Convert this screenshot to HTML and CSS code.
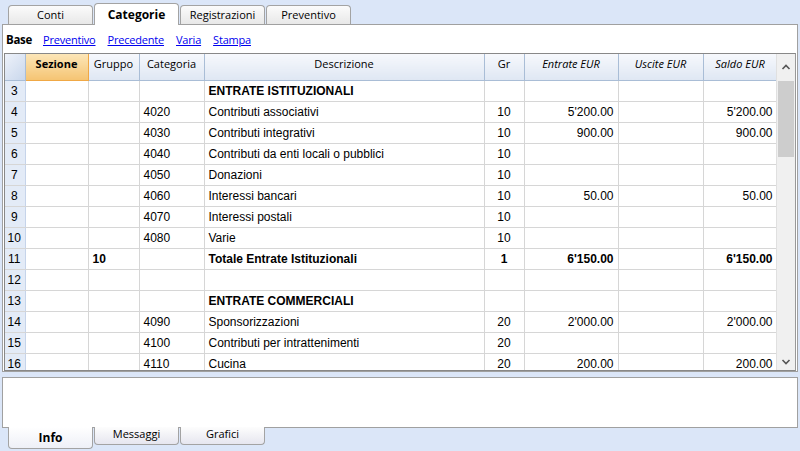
FILE: index.html
```html
<!DOCTYPE html>
<html>
<head>
<meta charset="utf-8">
<link rel="stylesheet" href="styles.css">
</head>
<body>
<div class="tabs top">
  <div class="tab">Conti</div>
  <div class="tab active">Categorie</div>
  <div class="tab">Registrazioni</div>
  <div class="tab">Preventivo</div>
</div>
<div class="panel">
  <div class="links">
    <span class="base">Base</span>
    <a>Preventivo</a>
    <a>Precedente</a>
    <a>Varia</a>
    <a>Stampa</a>
  </div>
  <div class="grid">
    <div class="tablewrap">
      <table>
        <colgroup>
          <col class="c-num"><col class="c-sez"><col class="c-gru"><col class="c-cat"><col class="c-desc"><col class="c-gr"><col class="c-ent"><col class="c-usc"><col class="c-sal">
        </colgroup>
        <thead>
          <tr>
            <th class="corner"></th>
            <th class="sel">Sezione</th>
            <th>Gruppo</th>
            <th>Categoria</th>
            <th>Descrizione</th>
            <th>Gr</th>
            <th class="it">Entrate EUR</th>
            <th class="it">Uscite EUR</th>
            <th class="it">Saldo EUR</th>
          </tr>
        </thead>
        <tbody>
          <tr class="first"><td class="n">3</td><td></td><td></td><td></td><td class="b">ENTRATE ISTITUZIONALI</td><td></td><td></td><td></td><td></td></tr>
          <tr><td class="n">4</td><td></td><td></td><td>4020</td><td>Contributi associativi</td><td class="c">10</td><td class="r">5'200.00</td><td></td><td class="r">5'200.00</td></tr>
          <tr><td class="n">5</td><td></td><td></td><td>4030</td><td>Contributi integrativi</td><td class="c">10</td><td class="r">900.00</td><td></td><td class="r">900.00</td></tr>
          <tr><td class="n">6</td><td></td><td></td><td>4040</td><td>Contributi da enti locali o pubblici</td><td class="c">10</td><td></td><td></td><td></td></tr>
          <tr><td class="n">7</td><td></td><td></td><td>4050</td><td>Donazioni</td><td class="c">10</td><td></td><td></td><td></td></tr>
          <tr><td class="n">8</td><td></td><td></td><td>4060</td><td>Interessi bancari</td><td class="c">10</td><td class="r">50.00</td><td></td><td class="r">50.00</td></tr>
          <tr><td class="n">9</td><td></td><td></td><td>4070</td><td>Interessi postali</td><td class="c">10</td><td></td><td></td><td></td></tr>
          <tr><td class="n">10</td><td></td><td></td><td>4080</td><td>Varie</td><td class="c">10</td><td></td><td></td><td></td></tr>
          <tr><td class="n">11</td><td></td><td class="b">10</td><td></td><td class="b">Totale Entrate Istituzionali</td><td class="c b">1</td><td class="r b">6'150.00</td><td></td><td class="r b">6'150.00</td></tr>
          <tr><td class="n">12</td><td></td><td></td><td></td><td></td><td></td><td></td><td></td><td></td></tr>
          <tr><td class="n">13</td><td></td><td></td><td></td><td class="b">ENTRATE COMMERCIALI</td><td></td><td></td><td></td><td></td></tr>
          <tr><td class="n">14</td><td></td><td></td><td>4090</td><td>Sponsorizzazioni</td><td class="c">20</td><td class="r">2'000.00</td><td></td><td class="r">2'000.00</td></tr>
          <tr><td class="n">15</td><td></td><td></td><td>4100</td><td>Contributi per intrattenimenti</td><td class="c">20</td><td></td><td></td><td></td></tr>
          <tr><td class="n">16</td><td></td><td></td><td>4110</td><td>Cucina</td><td class="c">20</td><td class="r">200.00</td><td></td><td class="r">200.00</td></tr>
        </tbody>
      </table>
    </div>
    <div class="scrollbar">
      <div class="arrow">
        <svg width="10" height="8" viewBox="0 0 10 8"><path d="M1.5 6 L5 2.5 L8.5 6" fill="none" stroke="#555" stroke-width="1.6"/></svg>
      </div>
      <div class="track"><div class="thumb"></div></div>
      <div class="arrow">
        <svg width="10" height="8" viewBox="0 0 10 8"><path d="M1.5 2 L5 5.5 L8.5 2" fill="none" stroke="#555" stroke-width="1.6"/></svg>
      </div>
    </div>
  </div>
</div>
<div class="info"></div>
<div class="tabs bottom">
  <div class="tab active">Info</div>
  <div class="tab">Messaggi</div>
  <div class="tab">Grafici</div>
</div>
</body>
</html>
```
FILE: styles.css
```css
html, body {
  margin: 0;
  padding: 0;
}
body {
  width: 800px;
  height: 451px;
  overflow: hidden;
  background: #dbe6f8;
  font-family: "Liberation Sans", Arial, sans-serif;
  font-size: 12px;
  color: #000;
}
.tabs {
  display: flex;
  padding-left: 8px;
  font-family: "Open Sans", "Noto Sans", sans-serif;
  font-size: 11px;
}
.tabs.top {
  height: 24px;
  align-items: flex-end;
}
.tabs .tab {
  box-sizing: border-box;
  width: 85px;
  text-align: center;
  color: #000;
}
.tabs.top .tab {
  height: 19px;
  line-height: 17px;
  margin-right: 1px;
  border: 1px solid #a3a3a3;
  border-bottom: none;
  border-radius: 4px 4px 0 0;
  background: linear-gradient(#fbfbfb, #e8e8e8);
}
.tabs.top .tab.active {
  line-height: 21px;
  background: #fff;
  font-weight: bold;
  font-size: 12px;
  margin-bottom: -1px;
  height: 22px;
  position: relative;
  z-index: 2;
}
.panel {
  box-sizing: border-box;
  margin: 0 2px;
  height: 348px;
  border: 1px solid #a0a0a0;
  background: #fff;
  padding: 0 1px 0 1px;
}
.links {
  height: 28px;
  box-sizing: border-box;
  padding: 8px 0 0 2px;
  display: flex;
  font-family: "Open Sans", "Noto Sans", sans-serif;
  font-size: 11px;
  line-height: 14px;
  letter-spacing: -0.2px;
}
.links .base {
  font-weight: bold;
  font-size: 11.5px;
  letter-spacing: -0.3px;
  margin-right: 11px;
}
.links a {
  color: #0000ee;
  text-decoration: underline;
  margin-right: 12px;
}
.grid {
  box-sizing: border-box;
  height: 318px;
  border: 1px solid #888;
  border-right: 1px solid #999;
  display: flex;
  overflow: hidden;
}
.tablewrap {
  width: 772px;
  overflow: hidden;
}
table {
  border-collapse: collapse;
  table-layout: fixed;
  width: 772px;
}
col.c-num { width: 20px; }
col.c-sez { width: 63px; }
col.c-gru { width: 51px; }
col.c-cat { width: 65px; }
col.c-desc { width: 280px; }
col.c-gr { width: 40px; }
col.c-ent { width: 94px; }
col.c-usc { width: 85px; }
col.c-sal { width: 74px; }
th {
  height: 26px;
  padding: 2px 0 0 0;
  box-sizing: border-box;
  vertical-align: top;
  font-family: "Open Sans", "Noto Sans", sans-serif;
  font-size: 11px;
  font-weight: normal;
  text-align: center;
  color: #000;
  background: linear-gradient(#f6f8fc, #dfe7f3);
  border-right: 1px solid #a9bdd6;
  border-bottom: 1px solid #a9bdd6;
  line-height: 16px;
}
th.corner {
  background: linear-gradient(135deg, #eef2fa, #c9d7ec);
}
th.sel {
  font-weight: bold;
  background: linear-gradient(#fce6b8, #f5c473);
  border-right: 1px solid #f0a845;
  border-bottom: 1px solid #f0a845;
}
th.it {
  font-style: italic;
}
td {
  height: 21px;
  box-sizing: border-box;
  padding: 0 4px;
  border-right: 1px solid #d6d6d6;
  border-bottom: 1px solid #d6d6d6;
  white-space: nowrap;
  overflow: hidden;
  line-height: 20px;
}
td.n {
  background: #e3ebf7;
  padding: 0 1px 0 0;
  text-align: center;
  border-right: 1px solid #c6d4ea;
  border-bottom: 1px solid #d6d6d6;
}
tr.first td.n {
  border-top: 1px solid #f0a845;
}
td.b { font-weight: bold; }
td.c { text-align: center; }
td.r { text-align: right; }
.scrollbar {
  width: 18px;
  background: #f0f0f0;
  display: flex;
  flex-direction: column;
  border-left: 1px solid #e0e0e0;
}
.arrow {
  height: 17px;
  display: flex;
  align-items: center;
  justify-content: center;
}
.scrollbar .arrow:first-child {
  height: 26px;
}
.track {
  flex: 1;
  padding: 1px 1px;
}
.thumb {
  height: 76px;
  background: #cdcdcd;
}
.info {
  box-sizing: border-box;
  margin: 5px 2px 0 2px;
  height: 51px;
  border: 1px solid #a0a0a0;
  background: #fff;
}
.tabs.bottom {
  align-items: flex-start;
  height: 24px;
}
.tabs.bottom .tab {
  height: 18px;
  line-height: 13px;
  margin-top: -1px;
  margin-right: 1px;
  border: 1px solid #a3a3a3;
  border-top: none;
  border-radius: 0 0 4px 4px;
  background: linear-gradient(#fdfdfd, #e6e6ef);
}
.tabs.bottom .tab.active {
  height: 22px;
  line-height: 22px;
  font-weight: bold;
  font-size: 12px;
  background: linear-gradient(#fff, #eef0f7);
  position: relative;
  z-index: 2;
}
```
